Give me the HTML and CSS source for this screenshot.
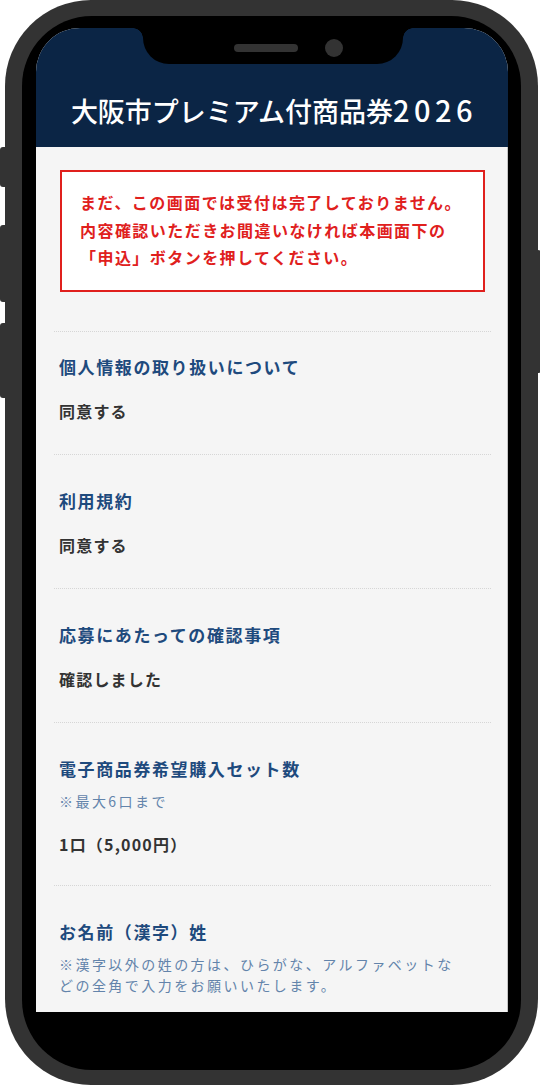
FILE: index.html
```html
<!DOCTYPE html>
<html lang="ja">
<head>
<meta charset="utf-8">
<title>大阪市プレミアム付商品券2026</title>
<link rel="stylesheet" href="styles.css">
</head>
<body>
<div class="phone">
  <span class="btn btn-l1"></span>
  <span class="btn btn-l2"></span>
  <span class="btn btn-l3"></span>
  <span class="btn btn-r1"></span>
  <div class="bezel">
    <div class="screen">
      <div class="notch">
        <span class="speaker"></span>
        <span class="camera"></span>
      </div>
      <header class="app-header">
        <h1 class="title">大阪市プレミアム付商品券<span class="digits">2026</span></h1>
      </header>
      <main class="content">
        <div class="notice-wrap">
          <div class="notice">まだ、この画面では受付は完了しておりません。<br>内容確認いただきお間違いなければ本画面下の<br>「申込」ボタンを押してください。</div>
        </div>
        <div class="sections">
          <section class="item item-first">
            <div class="label">個人情報の取り扱いについて</div>
            <div class="value">同意する</div>
          </section>
          <section class="item">
            <div class="label">利用規約</div>
            <div class="value">同意する</div>
          </section>
          <section class="item">
            <div class="label">応募にあたっての確認事項</div>
            <div class="value">確認しました</div>
          </section>
          <section class="item item-noted">
            <div class="label">電子商品券希望購入セット数</div>
            <div class="note">※最大6口まで</div>
            <div class="value">1口（5,000円）</div>
          </section>
          <section class="item">
            <div class="label">お名前（漢字）姓</div>
            <div class="note">※漢字以外の姓の方は、ひらがな、アルファベットな<br>どの全角で入力をお願いいたします。</div>
          </section>
        </div>
      </main>
    </div>
  </div>
</div>
</body>
</html>
```

FILE: styles.css
```css
* { box-sizing: border-box; }

html, body {
  margin: 0;
  padding: 0;
  background: #ffffff;
  font-family: "Noto Sans CJK JP", "Noto Sans", sans-serif;
}

.phone {
  position: relative;
  width: 533px;
  height: 1085px;
  margin-left: 5px;
  background: #333333;
  border-radius: 86px;
  padding: 16px 17px 15px 17px;
}

.btn {
  position: absolute;
  background: #333333;
  width: 6px;
}
.btn-l1 { left: -5px; top: 147px; height: 40px; border-radius: 3px 0 0 3px; }
.btn-l2 { left: -5px; top: 225px; height: 77px; border-radius: 3px 0 0 3px; }
.btn-l3 { left: -5px; top: 323px; height: 75px; border-radius: 3px 0 0 3px; }
.btn-r1 { right: -3px; top: 250px; height: 123px; width: 5px; border-radius: 0 3px 3px 0; }

.bezel {
  height: 100%;
  background: #000000;
  border-radius: 70px;
  padding: 12px 13px 58px 14px;
}

.screen {
  position: relative;
  height: 100%;
  background: #f5f5f5;
  border-radius: 44px 44px 0 0;
  overflow: hidden;
  display: flex;
  flex-direction: column;
}

.notch {
  position: absolute;
  top: 0;
  left: 107px;
  width: 260px;
  height: 36px;
  background: #000000;
  border-radius: 0 0 26px 26px;
  display: flex;
  align-items: flex-start;
  justify-content: center;
  gap: 27px;
  padding-top: 12px;
  padding-left: 30px;
}
.notch::before,
.notch::after {
  content: "";
  position: absolute;
  top: 0;
  width: 10px;
  height: 10px;
}
.notch::before {
  left: -10px;
  background: radial-gradient(circle at 0 100%, transparent 9.5px, #000 10px);
}
.notch::after {
  right: -10px;
  background: radial-gradient(circle at 100% 100%, transparent 9.5px, #000 10px);
}
.speaker {
  width: 64px;
  height: 8px;
  margin-top: 4px;
  border-radius: 4px;
  background: #333333;
}
.camera {
  width: 18px;
  height: 18px;
  margin-top: -1px;
  border-radius: 50%;
  background: #333333;
}

.app-header {
  height: 119px;
  flex: none;
  background: #0b2545;
  display: flex;
  align-items: flex-end;
  justify-content: center;
  padding-bottom: 18px;
}
.title {
  margin: 0;
  color: #ffffff;
  font-size: 27px;
  font-weight: 500;
  line-height: 36px;
  letter-spacing: 0;
  padding-left: 4px;
  white-space: nowrap;
}
.digits {
  font-size: 29px;
  letter-spacing: 4.5px;
}

.content {
  flex: 1;
  overflow: hidden;
  box-shadow: inset -1px 0 0 #c4c4c4;
}

.notice-wrap {
  padding: 23px 23px 0 24px;
}
.notice {
  background: #ffffff;
  border: 2px solid #e0201d;
  padding: 17px 6px 18px 18px;
  color: #e0201d;
  font-size: 16px;
  font-weight: 700;
  line-height: 27.5px;
  letter-spacing: 1.45px;
  white-space: nowrap;
}

.sections {
  margin: 39px 17px 0 18px;
}
.item {
  border-top: 1px dotted #d6d6d6;
  padding: 34px 5px 31px;
}
.item-first {
  padding-top: 23px;
}
.item-noted {
  padding-bottom: 29px;
}
.label {
  color: #1e4a7d;
  font-size: 17px;
  font-weight: 700;
  line-height: 24px;
  letter-spacing: 1.6px;
}
.value {
  margin-top: 20px;
  color: #333333;
  font-size: 16px;
  font-weight: 700;
  line-height: 24px;
  letter-spacing: 1.2px;
}
.note {
  margin-top: 10px;
  color: #6384ab;
  font-size: 14px;
  line-height: 21px;
  letter-spacing: 2.45px;
  white-space: nowrap;
}
```
